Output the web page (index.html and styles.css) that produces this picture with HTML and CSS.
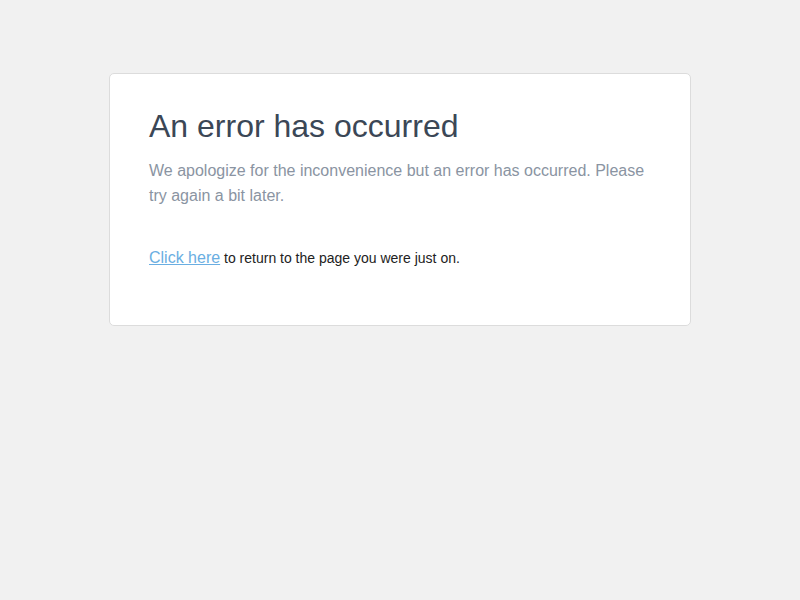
FILE: index.html
```html
<!DOCTYPE html>
<html>
<head>
<meta charset="utf-8">
<link rel="stylesheet" href="styles.css">
</head>
<body>
<div class="card">
  <h1 class="title">An error has occurred</h1>
  <p class="lead">We apologize for the inconvenience but an error has occurred. Please try again a bit later.</p>
  <p class="back"><a class="link" href="#">Click here</a> to return to the page you were just on.</p>
</div>
</body>
</html>
```
FILE: styles.css
```css
html, body {
  margin: 0;
  padding: 0;
  background: #f1f1f1;
  font-family: "Liberation Sans", Arial, sans-serif;
}
body {
  padding-top: 73px;
}
.card {
  box-sizing: border-box;
  width: 582px;
  margin: 0 auto;
  background: #fff;
  border: 1px solid #dcdcdc;
  border-radius: 5px;
  padding: 33px 39px 54px;
}
.title {
  margin: 0;
  font-size: 32px;
  font-weight: normal;
  line-height: 38px;
  color: #3b4756;
}
.lead {
  margin: 13px 0 0;
  font-size: 16px;
  line-height: 25px;
  color: #8a94a2;
}
.back {
  margin: 37px 0 0;
  font-size: 14px;
  line-height: 25px;
  color: #222;
}
.link {
  font-size: 16px;
  color: #6aaee2;
}
```
